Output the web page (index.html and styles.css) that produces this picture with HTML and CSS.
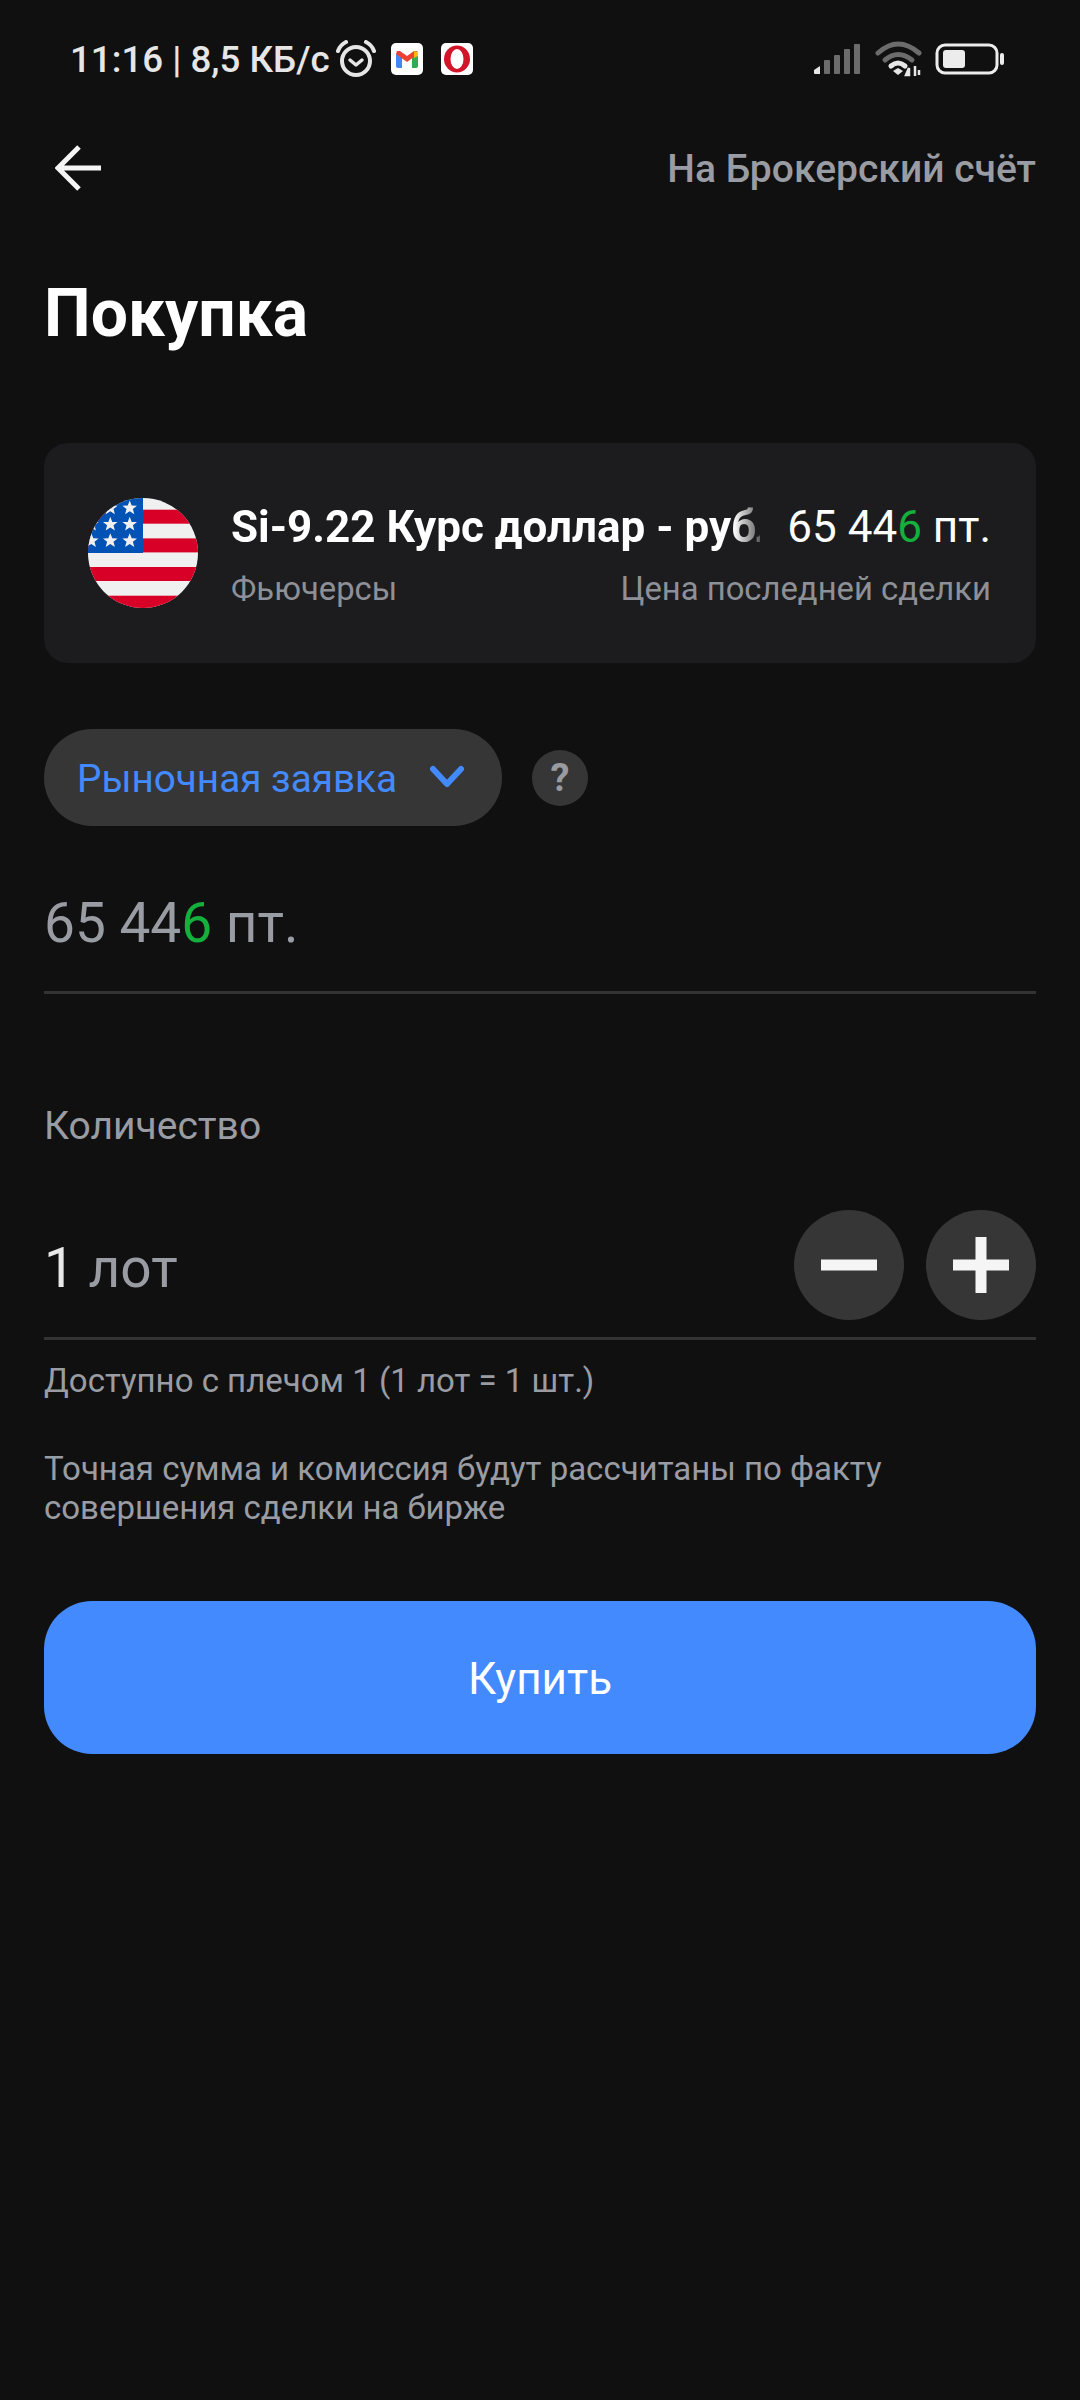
FILE: index.html
```html
<!DOCTYPE html>
<html lang="ru">
	<head>
		<meta charset="UTF-8">
		<title>Покупка</title>
		<link rel="stylesheet" href="styles.css">
	</head>
	<body>
		<div class="status">
			<div class="status-left">
				<span class="status-text">11:16 | 8,5 КБ/с</span>
				<svg class="alarm" width="40" height="38" viewBox="0 0 40 38">
					<circle cx="20" cy="21" r="14" fill="none" stroke="#e6e6e6" stroke-width="4"/>
					<path d="M14 20l6 5 6-5" fill="none" stroke="#e6e6e6" stroke-width="3.5" stroke-linecap="round" stroke-linejoin="round"/>
					<path d="M2 11Q4 5 10 2M38 11Q36 5 30 2" fill="none" stroke="#e6e6e6" stroke-width="4" stroke-linecap="round"/>
				</svg>
				<svg class="gmail" width="32" height="32" viewBox="0 0 32 32">
					<rect width="32" height="32" rx="5" fill="#fff"/>
					<path d="M5 25V11l3-2 3 2v14H7a2 2 0 0 1-2-2z" fill="#4285f4"/>
					<path d="M21 25V11l3-2 3 2v12a2 2 0 0 1-2 2z" fill="#34a853"/>
					<path d="M5 11l11 8 11-8-1-3-3-0-7 5-7-5-3 0z" fill="#ea4335"/>
					<path d="M23 8l4 1v4l-4 2z" fill="#fbbc04"/>
				</svg>
				<svg class="opera" width="32" height="32" viewBox="0 0 32 32">
					<rect width="32" height="32" rx="5" fill="#fff"/>
					<ellipse cx="16" cy="16" rx="13" ry="13.5" fill="#d3152a"/>
					<ellipse cx="16" cy="16" rx="6.5" ry="10" fill="#fff"/>
				</svg>
			</div>
			<div class="status-right">
				<svg width="48" height="32" viewBox="0 0 48 32">
					<path d="M1 27l6-4v8H2a1 1 0 0 1-1-1z" fill="#e6e6e6"/>
					<rect x="11" y="17" width="6" height="14" rx="1" fill="#6c6c6c"/>
					<rect x="21" y="12" width="6" height="19" rx="1" fill="#6c6c6c"/>
					<rect x="31" y="6" width="6" height="25" rx="1" fill="#6c6c6c"/>
					<rect x="41" y="1" width="6" height="30" rx="1" fill="#6c6c6c"/>
				</svg>
				<svg width="48" height="36" viewBox="0 0 48 36">
					<path d="M3 12Q23-6 44 12" fill="none" stroke="#6c6c6c" stroke-width="5" stroke-linecap="round"/>
					<path d="M10 19Q23 8 37 19" fill="none" stroke="#6c6c6c" stroke-width="5" stroke-linecap="round"/>
					<path d="M16 25Q23 19 30 25" fill="none" stroke="#e6e6e6" stroke-width="5" stroke-linecap="round"/>
					<path d="M18 30l5-3 5 3-5 4z" fill="#e6e6e6"/>
					<path d="M34 27l-3 7h3zM40 25v10M44 29v5" fill="#e6e6e6" stroke="#e6e6e6" stroke-width="2.5"/>
				</svg>
				<svg class="battery" width="70" height="32" viewBox="0 0 70 32">
					<rect x="2" y="2" width="60" height="28" rx="8" fill="none" stroke="#ececec" stroke-width="3"/>
					<rect x="8" y="7" width="22" height="18" rx="3" fill="#ececec"/>
					<rect x="65" y="10" width="4" height="12" rx="2" fill="#ececec"/>
				</svg>
			</div>
		</div>

		<div class="nav">
			<svg class="back" width="48" height="48" viewBox="0 0 48 48">
				<path d="M46 24H4M24 3L3 24l21 21" fill="none" stroke="#f5f5f5" stroke-width="5"/>
			</svg>
			<span class="nav-link">На Брокерский счёт</span>
		</div>

		<div class="page">
			<h1 class="title">Покупка</h1>

			<div class="card">
				<svg class="flag" width="110" height="110" viewBox="0 0 110 110">
					<defs>
						<clipPath id="flag-clip"><circle cx="55" cy="55" r="55"/></clipPath>
						<polygon id="star" points="0,-7.500 2,-2.400 7.300,-2.300 3.200,1 4.600,6.200 0,3.200 -4.600,6.200 -3.200,1 -7.300,-2.300 -2,-2.400" fill="#f0f0f0"/>
					</defs>
					<g clip-path="url(#flag-clip)">
						<rect width="110" height="110" fill="#f0f0f0"/>
						<rect y="11.700" width="110" height="14" fill="#d80027"/>
						<rect y="40.400" width="110" height="14" fill="#d80027"/>
						<rect y="69" width="110" height="14" fill="#d80027"/>
						<rect y="97.700" width="110" height="14" fill="#d80027"/>
						<rect width="55" height="55" fill="#0052b4"/>
						<use href="#star" x="41.700" y="10"/>
						<use href="#star" x="22.300" y="10"/>
						<use href="#star" x="41.700" y="26.300"/>
						<use href="#star" x="22.300" y="26.300"/>
						<use href="#star" x="3.300" y="26.300"/>
						<use href="#star" x="41.700" y="42.700"/>
						<use href="#star" x="22.300" y="42.700"/>
						<use href="#star" x="3.300" y="42.700"/>
					</g>
				</svg>
				<div class="card-body">
					<div class="card-row">
						<span class="card-name">Si-9.22 Курс доллар - рубль</span>
						<span class="card-price">65 44<span class="up">6</span> пт.</span>
					</div>
					<div class="card-row card-sub">
						<span>Фьючерсы</span>
						<span>Цена последней сделки</span>
					</div>
				</div>
			</div>

			<div class="order">
				<div class="order-type">
					<span class="order-name">Рыночная заявка</span>
					<svg width="36" height="26" viewBox="0 0 36 26">
						<path d="M4 4l14 15L32 4" fill="none" stroke="#448aff" stroke-width="6" stroke-linecap="round" stroke-linejoin="round"/>
					</svg>
				</div>
				<div class="help">?</div>
			</div>

			<div class="field field-price">65 44<span class="up">6</span> пт.</div>

			<div class="label">Количество</div>
			<div class="field field-qty">
				<span><span class="qty">1</span> лот</span>
				<div class="steppers">
					<div class="step">
						<svg width="56" height="56" viewBox="0 0 56 56"><rect y="22.500" width="56" height="11" fill="#f5f5f5"/></svg>
					</div>
					<div class="step">
						<svg width="56" height="56" viewBox="0 0 56 56"><path d="M0 22.500h22.500V0h11v22.500H56v11H33.500V56h-11V33.500H0z" fill="#f5f5f5"/></svg>
					</div>
				</div>
			</div>
			<p class="note note-first">Доступно с плечом 1 (1 лот = 1 шт.)</p>
			<p class="note note-second">Точная сумма и комиссия будут рассчитаны по факту совершения сделки на бирже</p>

			<div class="buy">Купить</div>
		</div>
	</body>
</html>
```

FILE: styles.css
```css
* {
	margin: 0;
	padding: 0;
	box-sizing: border-box;
}

body {
	width: 1080px;
	height: 2400px;
	background: #101011;
	color: #fff;
	font-family: Roboto, "Noto Sans", sans-serif;
	overflow: hidden;
}

.status {
	height: 116px;
	padding: 2px 75px 0 70px;
	display: flex;
	align-items: center;
	justify-content: space-between;
}

.status-left,
.status-right {
	display: flex;
	align-items: center;
}

.status-text {
	font-size: 36.700px;
	font-weight: 500;
	color: #e6e6e6;
}

.alarm {
	margin-left: 6px;
}

.gmail {
	margin-left: 15px;
}

.opera {
	margin-left: 18px;
}

.status-right {
	gap: 14px;
}

.battery {
	margin-left: -2px;
}

.nav {
	height: 104px;
	padding: 0 44px 0 55px;
	display: flex;
	align-items: center;
	justify-content: space-between;
}

.nav-link {
	padding-top: 2px;
	font-size: 39px;
	font-weight: 500;
	color: #9a9ca3;
}

.page {
	padding: 0 44px;
}

.title {
	margin-top: 56px;
	font-size: 66px;
	line-height: 76px;
	font-weight: 700;
}

.card {
	margin-top: 91px;
	height: 220px;
	padding: 0 45px 0 44px;
	display: flex;
	align-items: center;
	gap: 33px;
	background: #1c1c1e;
	border-radius: 24px;
}

.flag {
	flex: none;
}

.card-body {
	flex: 1;
	min-width: 0;
	padding-top: 3px;
}

.card-row {
	display: flex;
	justify-content: space-between;
	align-items: center;
}

.card-name {
	flex: 1;
	min-width: 0;
	font-size: 44px;
	font-weight: 700;
	white-space: nowrap;
	overflow: hidden;
	-webkit-mask-image: linear-gradient(to right, #000 95%, transparent 102%);
	mask-image: linear-gradient(to right, #000 95%, transparent 102%);
}

.card-price {
	margin-left: 27px;
	font-size: 44px;
	white-space: nowrap;
}

.up {
	color: #15b03c;
}

.card-sub {
	margin-top: 17px;
	font-size: 32.800px;
	color: #8e9097;
}

.order {
	margin-top: 66px;
	display: flex;
	align-items: center;
	gap: 30px;
}

.order-type {
	width: 458px;
	height: 97px;
	padding: 0 37px 0 33px;
	display: flex;
	align-items: center;
	justify-content: space-between;
	background: #363636;
	border-radius: 48px;
	font-size: 38.700px;
	color: #448aff;
}

.order-name {
	margin-top: 2px;
}

.help {
	width: 56px;
	height: 56px;
	border-radius: 50%;
	background: #363636;
	color: #999ba1;
	font-size: 38px;
	font-weight: 700;
	line-height: 56px;
	text-align: center;
}

.field {
	border-bottom: 3px solid #333;
	color: #9a9ca3;
}

.field-price {
	margin-top: 38px;
	height: 130px;
	padding-top: 26px;
	font-size: 55px;
	line-height: 66px;
}

.label {
	margin-top: 109px;
	font-size: 39px;
	line-height: 46px;
	color: #9a9ca3;
}

.field-qty {
	margin-top: 61px;
	height: 130px;
	display: flex;
	justify-content: space-between;
	font-size: 55px;
	line-height: 116px;
}

.qty {
	color: #e8e8e8;
}

.steppers {
	display: flex;
	gap: 22px;
}

.step {
	width: 110px;
	height: 110px;
	border-radius: 50%;
	background: #363636;
	display: flex;
	align-items: center;
	justify-content: center;
}

.note {
	font-size: 33px;
	line-height: 39px;
	color: #9a9ca3;
}

.note-first {
	margin-top: 21px;
}

.note-second {
	margin-top: 49px;
}

.buy {
	margin-top: 74px;
	height: 153px;
	border-radius: 48px;
	background: #448aff;
	font-size: 44px;
	line-height: 157px;
	text-align: center;
}
```
